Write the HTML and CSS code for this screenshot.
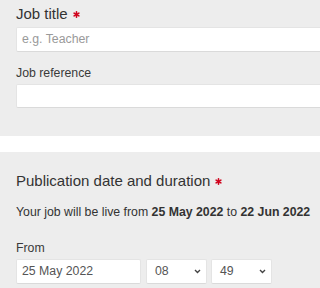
FILE: index.html
```html
<!DOCTYPE html>
<html>
<head>
<meta charset="utf-8">
<link rel="stylesheet" href="styles.css">
</head>
<body>
<div class="page">
  <section class="panel panel-top">
    <h2 class="heading">Job title<svg class="req" width="7" height="7" viewBox="0 0 7 7"><g stroke="#d0021b" stroke-width="1.6" stroke-linecap="round"><line x1="3.5" y1="0.8" x2="3.5" y2="6.2"/><line x1="1.1" y1="2.1" x2="5.9" y2="4.9"/><line x1="1.1" y1="4.9" x2="5.9" y2="2.1"/></g></svg></h2>
    <div class="input full placeholder">e.g. Teacher</div>
    <label class="label">Job reference</label>
    <div class="input full ref"></div>
  </section>
  <section class="panel panel-bottom">
    <h2 class="heading">Publication date and duration<svg class="req" width="7" height="7" viewBox="0 0 7 7"><g stroke="#d0021b" stroke-width="1.6" stroke-linecap="round"><line x1="3.5" y1="0.8" x2="3.5" y2="6.2"/><line x1="1.1" y1="2.1" x2="5.9" y2="4.9"/><line x1="1.1" y1="4.9" x2="5.9" y2="2.1"/></g></svg></h2>
    <p class="info">Your job will be live from <b>25 May 2022</b> to <b>22 Jun 2022</b></p>
    <label class="label from">From</label>
    <div class="row">
      <div class="input date">25 May 2022</div>
      <div class="input select sel1"><span>08</span><svg width="7" height="5" viewBox="0 0 7 5"><polyline points="1,1 3.5,3.5 6,1" fill="none" stroke="#444" stroke-width="1.4"/></svg></div>
      <div class="input select sel2"><span>49</span><svg width="7" height="5" viewBox="0 0 7 5"><polyline points="1,1 3.5,3.5 6,1" fill="none" stroke="#444" stroke-width="1.4"/></svg></div>
    </div>
  </section>
</div>
</body>
</html>
```

FILE: styles.css
```css
html, body {
  margin: 0;
  padding: 0;
  background: #ffffff;
  overflow: hidden;
}
body {
  font-family: "Liberation Sans", Arial, sans-serif;
  color: #333333;
}
.page {
  width: 100%;
  overflow: hidden;
}
.panel {
  background: #ededed;
  padding: 0 0 0 16px;
  overflow: hidden;
}
.panel-top {
  padding-top: 4px;
  padding-bottom: 28px;
}
.panel-bottom {
  margin-top: 16px;
  padding-top: 18.5px;
  padding-bottom: 20px;
}
.heading {
  margin: 0;
  font-size: 15px;
  font-weight: normal;
  line-height: 20px;
  color: #333333;
  white-space: nowrap;
}
.req {
  margin-left: 5px;
  vertical-align: 1px;
}
.panel-top .heading {
  margin-bottom: 3px;
}
.label {
  display: block;
  font-size: 12.3px;
  line-height: 16px;
  margin-top: 12.5px;
  margin-bottom: 3.5px;
  color: #3a3a3a;
}
.label.from {
  margin-top: 20px;
  margin-bottom: 3px;
}
.input {
  box-sizing: border-box;
  height: 25px;
  background: #ffffff;
  border: 1px solid #e4e4e4;
  border-bottom-color: #dadada;
  border-radius: 2px;
  font-size: 12.3px;
  line-height: 23px;
  padding-left: 5px;
  color: #555555;
}
.full {
  width: calc(100% + 4px);
}
.ref {
  height: 24px;
}
.placeholder {
  color: #9a9a9a;
}
.info {
  margin: 13.5px 0 0;
  font-size: 12.3px;
  line-height: 16px;
  white-space: nowrap;
  color: #333333;
}
.info b {
  font-weight: bold;
}
.row {
  display: flex;
}
.date {
  width: 125px;
  flex: none;
}
.select {
  flex: none;
  width: 61px;
  display: flex;
  align-items: center;
  justify-content: space-between;
  padding-left: 8px;
  padding-right: 5px;
}
.sel1 {
  margin-left: 5px;
}
.sel2 {
  margin-left: 4px;
}
```
